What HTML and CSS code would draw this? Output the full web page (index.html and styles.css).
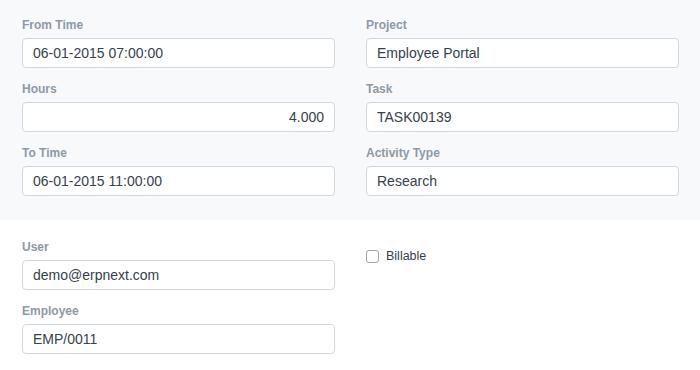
FILE: index.html
```html
<!DOCTYPE html>
<html lang="en">
<head>
    <meta charset="UTF-8">
    <meta name="viewport" content="width=device-width, initial-scale=1.0">
    <title>Timesheet Detail</title>
    <link rel="stylesheet" href="styles.css">
</head>
<body>
    <div class="section shaded">
        <div class="column">
            <div class="field">
                <label>From Time</label>
                <input type="text" value="06-01-2015 07:00:00">
            </div>
            <div class="field">
                <label>Hours</label>
                <input type="text" class="number" value="4.000">
            </div>
            <div class="field">
                <label>To Time</label>
                <input type="text" value="06-01-2015 11:00:00">
            </div>
        </div>
        <div class="column">
            <div class="field">
                <label>Project</label>
                <input type="text" value="Employee Portal">
            </div>
            <div class="field">
                <label>Task</label>
                <input type="text" value="TASK00139">
            </div>
            <div class="field">
                <label>Activity Type</label>
                <input type="text" value="Research">
            </div>
        </div>
    </div>

    <div class="section">
        <div class="column">
            <div class="field">
                <label>User</label>
                <input type="text" value="demo@erpnext.com">
            </div>
            <div class="field">
                <label>Employee</label>
                <input type="text" value="EMP/0011">
            </div>
        </div>
        <div class="column">
            <label class="check">
                <input type="checkbox">
                <span>Billable</span>
            </label>
        </div>
    </div>
</body>
</html>
```

FILE: styles.css
```css
body {
    margin: 0;
    font-family: "Liberation Sans", Arial, sans-serif;
    color: #36414c;
    background: #fff;
}
.section {
    display: grid;
    grid-template-columns: 313px 313px;
    column-gap: 31px;
    padding: 16px 22px 12px;
}
.section.shaded {
    background: #f7f9fb;
}
.section + .section {
    padding-top: 18px;
}
.field {
    margin-bottom: 12px;
}
.field label {
    display: block;
    font-size: 12px;
    font-weight: bold;
    line-height: 18px;
    color: #8d99a6;
    margin-bottom: 4px;
}
.field input {
    box-sizing: border-box;
    display: block;
    width: 100%;
    height: 30px;
    padding: 0 10px;
    border: 1px solid #d1d8dd;
    border-radius: 4px;
    background: #fff;
    font-family: "Liberation Sans", Arial, sans-serif;
    font-size: 14px;
    color: #36414c;
}
.field input.number {
    text-align: right;
}
.check {
    display: flex;
    align-items: center;
    margin-top: 11px;
    font-size: 12.5px;
    color: #36414c;
}
.check input {
    appearance: none;
    -webkit-appearance: none;
    box-sizing: border-box;
    width: 13px;
    height: 13px;
    margin: 0 7px 0 0;
    border: 1px solid #a0a6ad;
    border-radius: 3px;
    background: #fff;
}
```
